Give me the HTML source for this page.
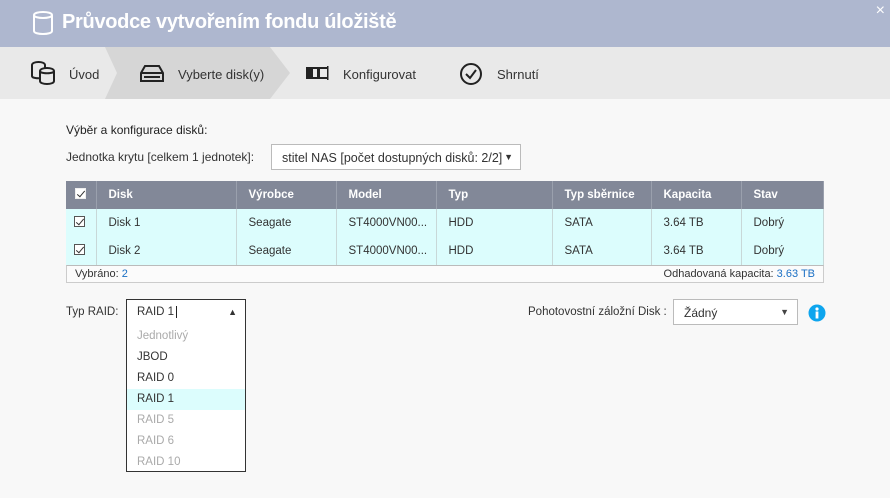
<!DOCTYPE html>
<html><head><meta charset="utf-8"><style>
*{box-sizing:border-box;margin:0;padding:0}
body{width:890px;height:498px;background:#f8f8f8;font-family:"Liberation Sans",sans-serif;font-size:12px;color:#333;position:relative;overflow:hidden}
.abs{position:absolute}
.title{left:0;top:0;width:890px;height:47px;background:#aeb7cf}
.title span{position:absolute;left:62px;top:11px;font-size:20px;color:#fff;font-weight:bold;letter-spacing:-0.3px}
.nav{left:0;top:47px;width:890px;height:52px;background:#e9e9e9}
.nav .t{position:absolute;top:20px;font-size:13px;color:#333}
table{border-collapse:collapse;position:absolute;left:66px;top:181px;width:757px;table-layout:fixed}
th{background:#828898;color:#fff;font-weight:bold;text-align:left;height:28px;padding-left:12px;border-right:1px solid #9aa0ad;font-size:11.5px}
td{background:#dcfdfd;height:28px;padding-left:12px;border-right:1px solid #c8d8d8;font-size:11.5px}
.cb{display:inline-block;width:11px;height:11px;border:1px solid #555;background:#fff;position:relative}
.cb:after{content:"";position:absolute;left:3px;top:0px;width:3px;height:7px;border:solid #333;border-width:0 1px 1px 0;transform:rotate(40deg)}
th .cb{border-color:#eee;background:#fff}
.sel{background:#fff;border:1px solid #bbb}
.dd div{height:21px;padding-left:10px;line-height:21px;font-size:11.5px}
</style></head><body>
<div class="abs title">
<svg class="abs" style="left:32px;top:10px" width="22" height="26" viewBox="0 0 22 26"><path d="M2 5 C2 1,20 1,20 5 V21 C20 25,2 25,2 21 Z M2 5 C2 9,20 9,20 5" fill="none" stroke="#fff" stroke-width="2"/></svg>
<span>Průvodce vytvořením fondu úložiště</span>
<div class="abs" style="right:5px;top:2px;color:#fff;font-size:16px">×</div>
</div>
<div class="abs nav">
<svg class="abs" style="left:105px;top:0" width="190" height="52"><polygon points="0,0 165,0 185,26 165,52 0,52 12,26" fill="#d6d6d6"/></svg>
<svg class="abs" style="left:30px;top:14px" width="26" height="24" viewBox="0 0 26 24"><g fill="none" stroke="#222" stroke-width="2"><path d="M2 4 C2 0,15 0,15 4 V15 C15 18,2 18,2 15 Z"/><path d="M10 10 C10 6,24 6,24 10 V20 C24 24,10 24,10 20 Z" fill="#e9e9e9"/><path d="M10 10 C10 13,24 13,24 10"/></g></svg>
<div class="t" style="left:69px">Úvod</div>
<svg class="abs" style="left:140px;top:18px" width="24" height="17" viewBox="0 0 24 17"><g fill="none" stroke="#222" stroke-width="2"><path d="M5 1 H19 L23 8 V16 H1 V8 Z M1 8 H23"/></g><rect x="4" y="11" width="16" height="2" fill="#222"/></svg>
<div class="t" style="left:178px">Vyberte disk(y)</div>
<svg class="abs" style="left:306px;top:19px" width="24" height="14"><rect x="0" y="1" width="22" height="12" fill="#222"/><rect x="7" y="3" width="4" height="8" fill="#e9e9e9"/><rect x="14" y="3" width="4" height="8" fill="#e9e9e9"/><rect x="18" y="3" width="3" height="8" fill="#e9e9e9"/><rect x="21" y="0" width="1.5" height="14" fill="#222"/></svg>
<div class="t" style="left:343px">Konfigurovat</div>
<svg class="abs" style="left:459px;top:15px" width="24" height="24"><circle cx="12" cy="12" r="10" fill="none" stroke="#222" stroke-width="2"/><path d="M7 12 L11 16 L17 8" fill="none" stroke="#222" stroke-width="2"/></svg>
<div class="t" style="left:497px">Shrnutí</div>
</div>
<div class="abs" style="left:66px;top:123px;font-size:12px;color:#222">Výběr a konfigurace disků:</div>
<div class="abs" style="left:66px;top:150px;font-size:12px;color:#333">Jednotka krytu [celkem 1 jednotek]:</div>
<div class="abs sel" style="left:271px;top:144px;width:250px;height:26px"><div class="abs" style="left:10px;top:6px;width:232px;overflow:hidden;font-size:12.5px;white-space:nowrap">stitel NAS [počet dostupných disků: 2/2]</div><span class="abs" style="right:7px;top:7px;font-size:9px">▼</span></div>
<table>
<colgroup><col style="width:30px"><col style="width:140px"><col style="width:100px"><col style="width:100px"><col style="width:116px"><col style="width:99px"><col style="width:90px"><col style="width:82px"></colgroup>
<tr><th style="padding-left:9px"><span class="cb"></span></th><th>Disk</th><th>Výrobce</th><th>Model</th><th>Typ</th><th>Typ sběrnice</th><th>Kapacita</th><th>Stav</th></tr>
<tr><td style="padding-left:8px"><span class="cb"></span></td><td>Disk 1</td><td>Seagate</td><td>ST4000VN00...</td><td>HDD</td><td>SATA</td><td>3.64 TB</td><td>Dobrý</td></tr>
<tr><td style="padding-left:8px"><span class="cb"></span></td><td>Disk 2</td><td>Seagate</td><td>ST4000VN00...</td><td>HDD</td><td>SATA</td><td>3.64 TB</td><td>Dobrý</td></tr>
</table>
<div class="abs" style="left:66px;top:265px;width:758px;height:18px;border:1px solid #ccc;border-top:1px solid #bbb;background:#fbfbfb;font-size:11px">
<span class="abs" style="left:8px;top:2px">Vybráno: <span style="color:#1a6fc4">2</span></span>
<span class="abs" style="right:8px;top:2px">Odhadovaná kapacita: <span style="color:#1a6fc4">3.63 TB</span></span></div>
<div class="abs" style="left:66px;top:306px;font-size:11.5px">Typ RAID:</div>
<div class="abs sel" style="left:126px;top:299px;width:120px;height:26px;border-color:#333"><span class="abs" style="left:10px;top:6px;font-size:11.5px">RAID 1<span style="border-left:1px solid #222;margin-left:2px"></span></span><span class="abs" style="right:8px;top:7px;font-size:9px">▲</span></div>
<div class="abs dd" style="left:126px;top:324px;width:120px;height:148px;background:#fff;border:1px solid #333;border-top:none;padding-top:2px">
<div style="color:#aaa">Jednotlivý</div><div>JBOD</div><div>RAID 0</div><div style="background:#dcfdfd">RAID 1</div><div style="color:#aaa">RAID 5</div><div style="color:#aaa">RAID 6</div><div style="color:#aaa">RAID 10</div></div>
<div class="abs" style="left:528px;top:306px;font-size:11.5px">Pohotovostní záložní Disk :</div>
<div class="abs sel" style="left:673px;top:299px;width:125px;height:26px"><span class="abs" style="left:10px;top:6px;font-size:12px">Žádný</span><span class="abs" style="right:8px;top:7px;font-size:9px;color:#444">▼</span></div>
<svg class="abs" style="left:808px;top:304px" width="18" height="18"><circle cx="9" cy="9" r="8.5" fill="#0ea5ee"/><circle cx="9" cy="5" r="1.6" fill="#fff"/><rect x="7.6" y="7.5" width="2.8" height="7" fill="#fff"/></svg>
</body></html>
